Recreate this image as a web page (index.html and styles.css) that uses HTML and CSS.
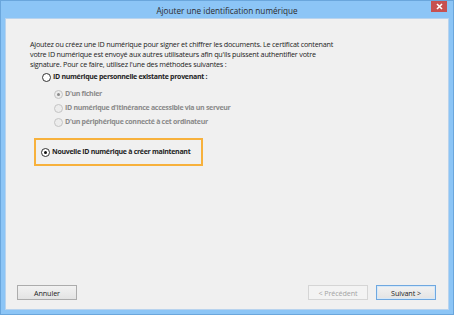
FILE: index.html
```html
<!DOCTYPE html>
<html lang="fr">
<head>
<meta charset="utf-8">
<title>Ajouter une identification numérique</title>
<link rel="stylesheet" href="styles.css">
</head>
<body>
<div class="window">
  <div class="titlebar">
    <span class="title">Ajouter une identification numérique</span>
    <span class="close" aria-label="Fermer">
      <svg width="7" height="7" viewBox="0 0 7 7"><path d="M1 1 L6 6 M6 1 L1 6" stroke="#fff" stroke-width="1.6"/></svg>
    </span>
  </div>
  <div class="panel">
    <div class="content">
      <p class="intro">Ajoutez ou créez une ID numérique pour signer et chiffrer les documents. Le certificat contenant votre ID numérique est envoyé aux autres utilisateurs afin qu'ils puissent authentifier votre signature. Pour ce faire, utilisez l'une des méthodes suivantes :</p>
      <label class="option main">
        <span class="radio"></span>
        <span class="label bold">ID numérique personnelle existante provenant :</span>
      </label>
      <div class="suboptions">
        <label class="option sub disabled">
          <span class="radio checked"></span>
          <span class="label bold">D'un fichier</span>
        </label>
        <label class="option sub disabled">
          <span class="radio"></span>
          <span class="label bold">ID numérique d'itinérance accessible via un serveur</span>
        </label>
        <label class="option sub disabled">
          <span class="radio"></span>
          <span class="label bold">D'un périphérique connecté à cet ordinateur</span>
        </label>
      </div>
      <div class="highlight">
        <label class="option">
          <span class="radio checked"></span>
          <span class="label bold">Nouvelle ID numérique à créer maintenant</span>
        </label>
      </div>
    </div>
    <div class="buttons">
      <button class="btn">Annuler</button>
      <div class="spacer"></div>
      <button class="btn disabled">&lt; Précédent</button>
      <button class="btn default">Suivant &gt;</button>
    </div>
  </div>
</div>
</body>
</html>
```
FILE: styles.css
```css
* { box-sizing: border-box; }
html, body {
  margin: 0;
  padding: 0;
  width: 454px;
  height: 315px;
  overflow: hidden;
}
body {
  font-family: "Open Sans", "Noto Sans", sans-serif;
  color: #1e1e1e;
}
.window {
  width: 454px;
  height: 315px;
  background: #8cc5f6;
  border: 1px solid #6aa6dc;
  display: flex;
  flex-direction: column;
}
.titlebar {
  height: 17px;
  display: flex;
  align-items: center;
  justify-content: center;
  position: relative;
}
.title {
  font-size: 8.2px;
  color: #2c2c2c;
  margin-top: 1px;
}
.close {
  position: absolute;
  right: 6px;
  top: 0;
  width: 16px;
  height: 11px;
  background: #c75050;
  display: flex;
  align-items: center;
  justify-content: center;
}
.panel {
  flex: 1;
  margin: 0 4px 4px 4px;
  background: #f0f0f0;
  border: 1px solid #b8d3ee;
  display: flex;
  flex-direction: column;
  padding: 0 11px 9px 11px;
}
.content {
  flex: 1;
  padding: 20px 0 0 13px;
}
.intro {
  margin: 0;
  width: 310px;
  font-size: 7.2px;
  letter-spacing: -0.2px;
  line-height: 10px;
  color: #222;
}
.option {
  display: flex;
  align-items: center;
  font-size: 7px;
  letter-spacing: -0.3px;
  line-height: 10px;
  white-space: nowrap;
}
.bold { font-weight: 700; }
.radio {
  width: 9px;
  height: 9px;
  border-radius: 50%;
  border: 1px solid #333;
  background: #fff;
  margin-right: 2px;
  position: relative;
  flex: none;
}
.radio.checked::after {
  content: "";
  position: absolute;
  left: 2px;
  top: 2px;
  width: 3px;
  height: 3px;
  border-radius: 50%;
  background: #111;
}
.option.main {
  margin: 3px 0 0 12px;
}
.suboptions {
  margin: 7px 0 0 24px;
  display: flex;
  flex-direction: column;
  gap: 4px;
}
.option.disabled { color: #8a8a8a; }
.option.disabled .radio {
  border-color: #c4c4c4;
  background: #ececec;
}
.option.disabled .radio.checked::after { background: #8a8a8a; }
.highlight {
  margin: 11px 0 0 4px;
  width: 169px;
  height: 28px;
  border: 2px solid #f7b13c;
  display: flex;
  align-items: center;
  padding-left: 5px;
}
.buttons {
  display: flex;
  align-items: center;
  gap: 8px;
}
.spacer { flex: 1; }
.btn {
  width: 60px;
  height: 15px;
  font-family: inherit;
  font-size: 7.2px;
  letter-spacing: -0.1px;
  color: #222;
  background: linear-gradient(#f2f2f2, #e3e3e3);
  border: 1px solid #acacac;
  padding: 0;
  margin: 0;
}
.btn.disabled {
  color: #a3a3a3;
  border-color: #d5d5d5;
  background: #f3f3f3;
}
.btn.default {
  border-color: #6fa8e0;
  box-shadow: inset 0 0 0 1px #d6e8f8;
  margin-right: 1px;
}
```
